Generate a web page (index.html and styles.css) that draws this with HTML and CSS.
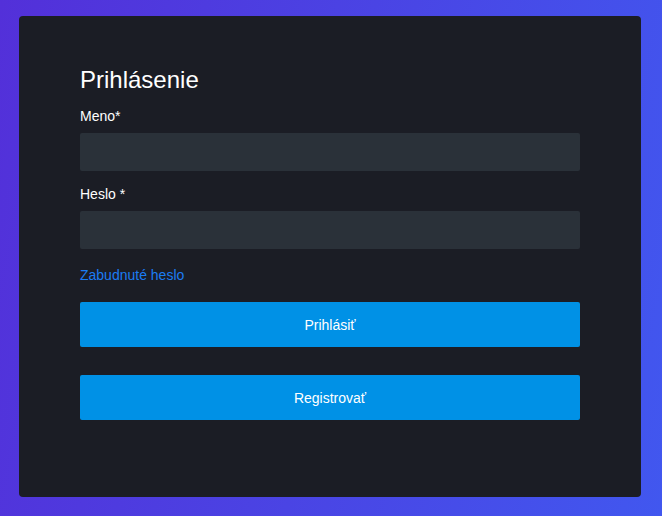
FILE: index.html
```html
<!DOCTYPE html>
<html lang="sk">
<head>
<meta charset="utf-8">
<title>Prihlásenie</title>
<link rel="stylesheet" href="styles.css">
</head>
<body>
<main class="page">
  <section class="card">
    <form class="form">
      <h1 class="title">Prihlásenie</h1>
      <label class="label" for="meno">Meno*</label>
      <input class="input" id="meno" type="text">
      <label class="label label-gap" for="heslo">Heslo *</label>
      <input class="input" id="heslo" type="password">
      <a class="link" href="#">Zabudnuté heslo</a>
      <button class="btn" type="button">Prihlásiť</button>
      <button class="btn btn-second" type="button">Registrovať</button>
    </form>
  </section>
</main>
</body>
</html>
```
FILE: styles.css
```css
* { box-sizing: border-box; }
html, body { margin: 0; height: 100%; }
body {
  font-family: "Liberation Sans", Arial, sans-serif;
  background: linear-gradient(100deg, #5330d9 0%, #4a44e4 50%, #4157ef 100%);
}
.page {
  padding: 16px 21px 19px 19px;
  height: 516px;
}
.card {
  background: #1b1d25;
  border-radius: 4px;
  height: 481px;
  padding: 49px 61px 0 61px;
}
.form {
  display: flex;
  flex-direction: column;
  width: 500px;
}
.title {
  margin: 0 0 12px 0;
  font-size: 24px;
  font-weight: 400;
  line-height: 29px;
  color: #ffffff;
}
.label {
  font-size: 14px;
  line-height: 21px;
  color: #ffffff;
  margin-bottom: 6px;
}
.label-gap { margin-top: 13px; }
.input {
  height: 38px;
  background: #2a3139;
  border: none;
  border-radius: 2px;
  outline: none;
  color: #fff;
  font: inherit;
}
.link {
  margin-top: 16px;
  font-size: 14px;
  line-height: 21px;
  color: #1b7cf3;
  text-decoration: none;
  align-self: flex-start;
}
.btn {
  margin-top: 16px;
  height: 45px;
  border: none;
  border-radius: 2px;
  background: #0091e6;
  color: #ffffff;
  font-family: inherit;
  font-size: 14px;
  cursor: pointer;
}
.btn-second { margin-top: 28px; }
```
